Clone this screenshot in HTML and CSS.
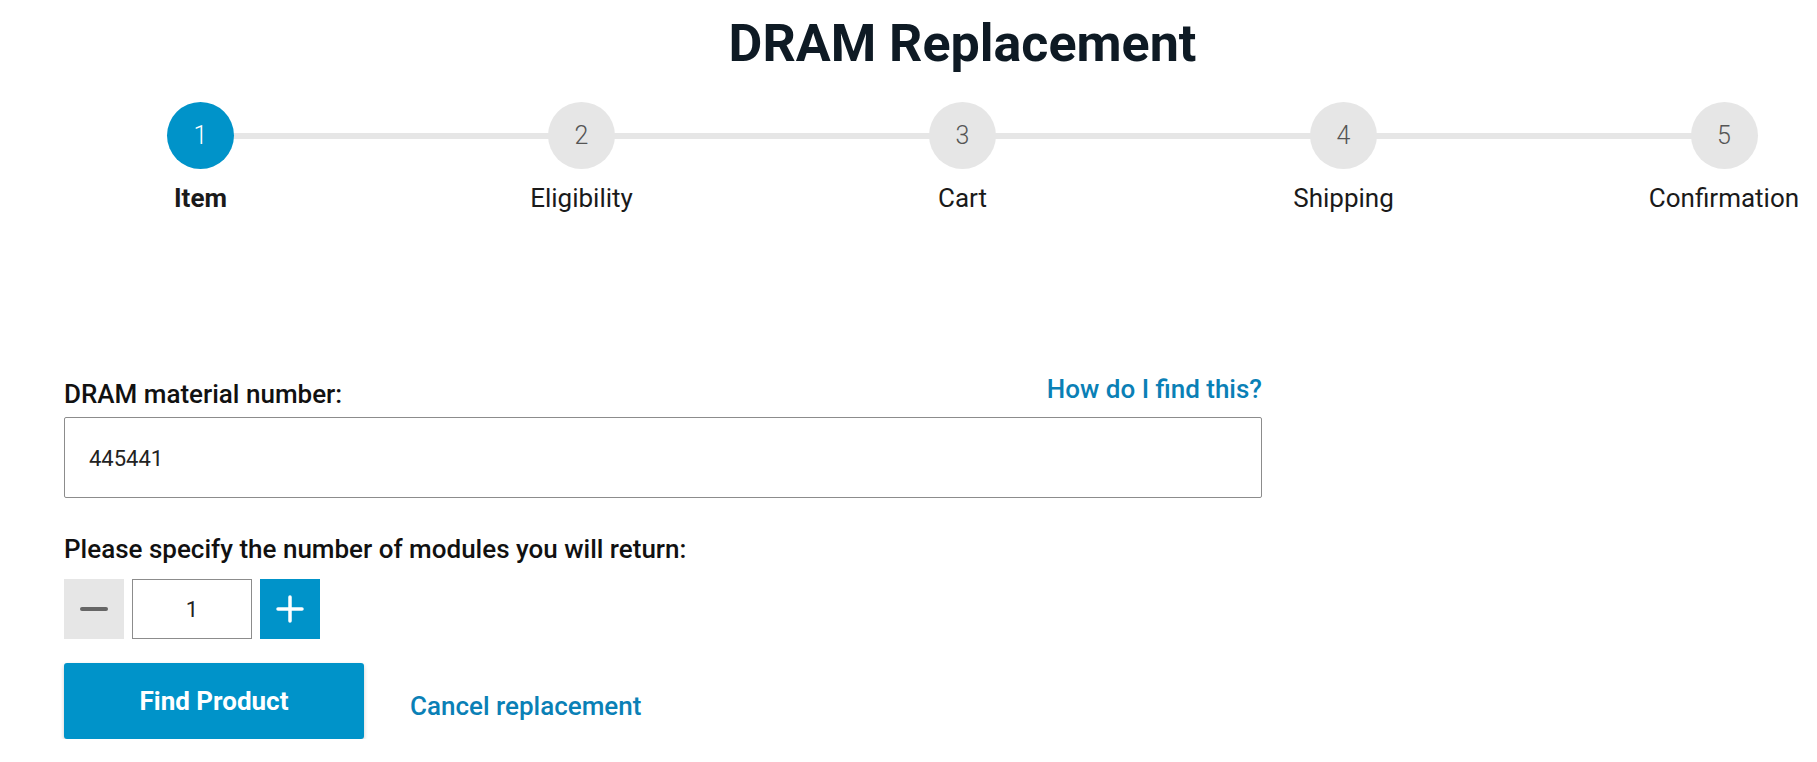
FILE: index.html
```html
<!DOCTYPE html>
<html lang="en">
<head>
    <meta charset="UTF-8">
    <title>DRAM Replacement</title>
    <link rel="stylesheet" href="styles.css">
</head>
<body>

    <div class="page">
        <h1 class="title">DRAM Replacement</h1>

        <div class="steps">
            <div class="step active">
                <div class="step-num">1</div>
                <div class="step-label">Item</div>
            </div>
            <div class="step">
                <div class="step-num">2</div>
                <div class="step-label">Eligibility</div>
            </div>
            <div class="step">
                <div class="step-num">3</div>
                <div class="step-label">Cart</div>
            </div>
            <div class="step">
                <div class="step-num">4</div>
                <div class="step-label">Shipping</div>
            </div>
            <div class="step last">
                <div class="step-num">5</div>
                <div class="step-label">Confirmation</div>
            </div>
        </div>
    </div>

    <div class="form">
        <div class="label-row">
            <label for="material">DRAM material number:</label>
            <a href="#" class="link help-link">How do I find this?</a>
        </div>
        <input type="text" id="material" class="text-input" value="445441">

        <div class="qty-label">Please specify the number of modules you will return:</div>
        <div class="qty">
            <button type="button" class="qty-btn minus" command="decrease">
                <svg width="28" height="6" viewBox="0 0 28 6"><line x1="2" y1="3" x2="26" y2="3" stroke="#666" stroke-width="4" stroke-linecap="round"/></svg>
            </button>
            <input type="text" id="qty" class="qty-input" value="1">
            <button type="button" class="qty-btn plus" command="increase">
                <svg width="28" height="28" viewBox="0 0 28 28"><path d="M2 14H26M14 2V26" stroke="#fff" stroke-width="3.5" stroke-linecap="round"/></svg>
            </button>
        </div>

        <div class="actions">
            <button type="button" class="primary" command="findproduct">Find Product</button>
            <a href="#" class="link cancel-link">Cancel replacement</a>
        </div>
    </div>

    <script>
        'use strict';

        const qtyInput = document.querySelector('#qty');

        document.querySelector('[command="decrease"]').addEventListener('click', () => {
            const n = parseInt(qtyInput.value, 10) || 1;
            qtyInput.value = Math.max(1, n - 1);
        });

        document.querySelector('[command="increase"]').addEventListener('click', () => {
            const n = parseInt(qtyInput.value, 10) || 0;
            qtyInput.value = n + 1;
        });
    </script>
</body>
</html>
```

FILE: styles.css
```css
html {
    overflow: hidden;
}

body {
    margin: 0;
    font-family: Roboto, "Liberation Sans", sans-serif;
    color: #111;
    background: #fff;
}

.page {
    width: 1807px;
    margin-left: 10px;
}

.title {
    margin: 14px 0 0;
    padding-left: 98px;
    font-size: 52px;
    line-height: 60px;
    font-weight: 700;
    text-align: center;
    color: #0e1a24;
}

.steps {
    display: flex;
    margin-top: 28px;
}

.step {
    position: relative;
    width: 381px;
    display: flex;
    flex-direction: column;
    align-items: center;
}

/* connector to the next step, drawn behind the circles */
.step::after {
    content: "";
    position: absolute;
    top: 31px;
    left: 190px;
    width: 381px;
    height: 6px;
    background: #e6e6e6;
}

.step.last {
    width: 186px;
    margin-left: 97px;
}

.step.last::after {
    display: none;
}

.step-num {
    position: relative;
    z-index: 1;
    width: 67px;
    height: 67px;
    border-radius: 50%;
    background: #e6e6e6;
    color: #555;
    font-size: 25px;
    font-weight: 300;
    line-height: 67px;
    text-align: center;
}

.step.active .step-num {
    background: #0093c9;
    color: #fff;
}

.step-label {
    margin-top: 14px;
    font-size: 26px;
    line-height: 30px;
    color: #1a1a1a;
}

.step.active .step-label {
    font-weight: 700;
}

.form {
    width: 1198px;
    margin: 166px 0 0 64px;
}

.label-row {
    display: flex;
    justify-content: space-between;
    align-items: flex-start;
}

label,
.qty-label {
    font-size: 26px;
    line-height: 30px;
    font-weight: 500;
    color: #111;
}

.link {
    color: #0a80b6;
    font-size: 26px;
    line-height: 30px;
    font-weight: 500;
    text-decoration: none;
}

.help-link {
    line-height: 20px;
}

.text-input {
    display: block;
    box-sizing: border-box;
    width: 100%;
    height: 81px;
    margin-top: 8px;
    padding: 2px 24px 0;
    border: 1px solid #8c8c8c;
    border-radius: 2px;
    font-family: inherit;
    font-size: 22px;
    color: #222;
}

.qty-label {
    margin-top: 36px;
}

.qty {
    display: flex;
    gap: 8px;
    margin-top: 15px;
}

.qty-btn {
    width: 60px;
    height: 60px;
    padding: 0;
    border: 0;
    display: flex;
    align-items: center;
    justify-content: center;
    cursor: pointer;
}

.qty-btn.minus {
    background: #e6e6e6;
}

.qty-btn.plus {
    background: #0093c9;
}

.qty-input {
    box-sizing: border-box;
    width: 120px;
    height: 60px;
    border: 1px solid #8c8c8c;
    text-align: center;
    font-family: inherit;
    font-size: 22px;
    color: #222;
}

.actions {
    display: flex;
    align-items: center;
    gap: 46px;
    margin-top: 24px;
}

.primary {
    width: 300px;
    height: 76px;
    border: 0;
    border-radius: 3px;
    background: #0093c9;
    color: #fff;
    font-family: inherit;
    font-size: 26px;
    font-weight: 700;
    box-shadow: 0 2px 4px rgba(0, 0, 0, 0.2);
    cursor: pointer;
}

.cancel-link {
    padding-top: 10px;
}
```
